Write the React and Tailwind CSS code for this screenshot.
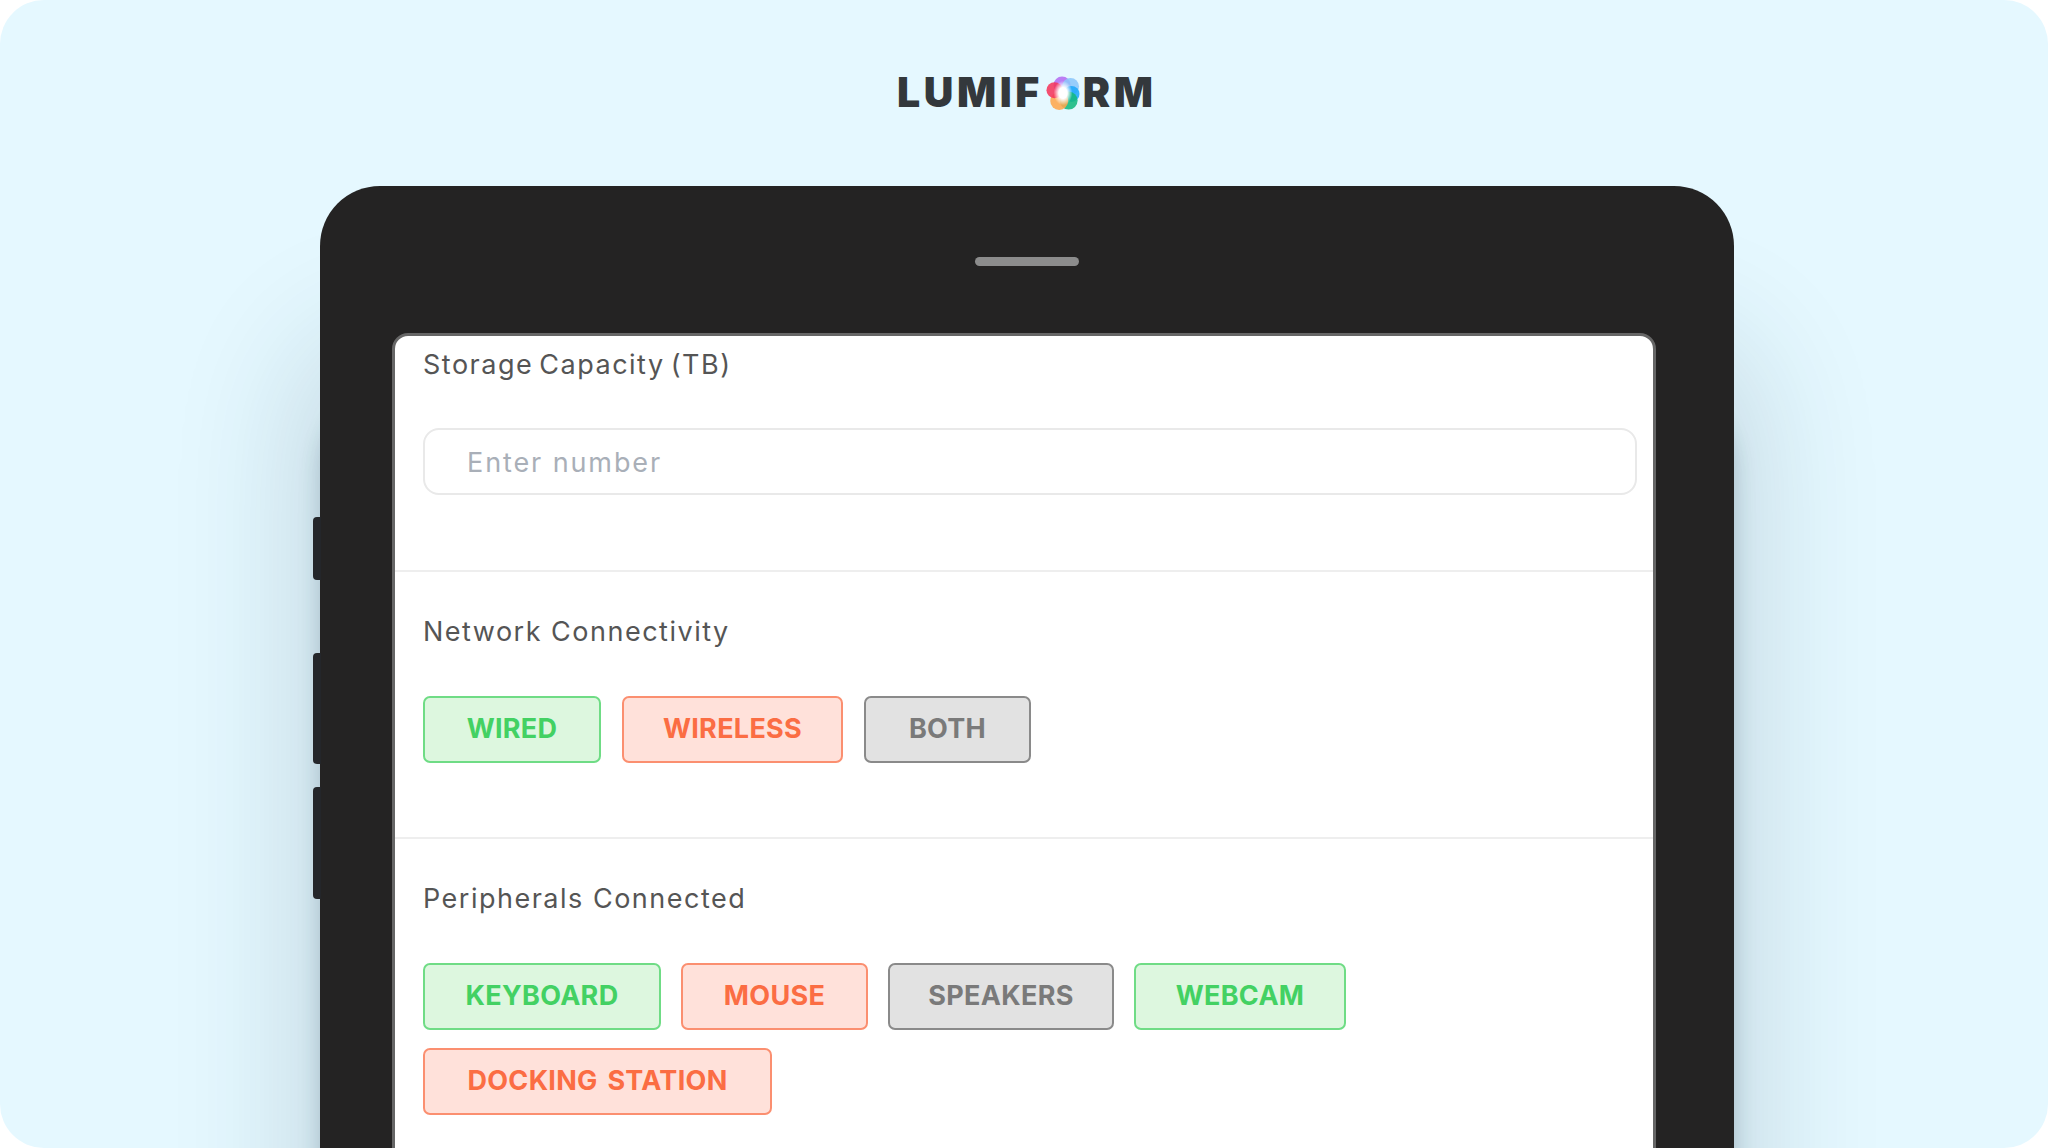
const toneClasses = {
  green: 'border-[#6fdc85] bg-[#ddf7df] text-[#43d163]',
  red: 'border-[#fb8f70] bg-[#ffe1da] text-[#fb6d43]',
  gray: 'border-[#8a8a8a] bg-[#e2e2e2] text-[#7a7a7a]',
};

const network = [
  { label: 'WIRED', tone: 'green', width: 'w-[178px]' },
  { label: 'WIRELESS', tone: 'red', width: 'w-[221px]' },
  { label: 'BOTH', tone: 'gray', width: 'w-[167px]' },
];

const peripherals = [
  { label: 'KEYBOARD', tone: 'green', width: 'w-[238px]' },
  { label: 'MOUSE', tone: 'red', width: 'w-[187px]' },
  { label: 'SPEAKERS', tone: 'gray', width: 'w-[226px]' },
  { label: 'WEBCAM', tone: 'green', width: 'w-[212px]' },
  { label: 'DOCKING STATION', tone: 'red', width: 'w-[349px]' },
];

function Flower() {
  return (
    <svg viewBox="0 0 36 36" className="w-[34px] h-[34px] mx-[3px]">
      <defs>
        <radialGradient id="core">
          <stop offset="0.45" stopColor="#fff" />
          <stop offset="1" stopColor="#fff" stopOpacity="0" />
        </radialGradient>
      </defs>
      <g fillOpacity="0.88">
        <circle cx="17" cy="9.5" r="9" fill="#b56cf2" />
        <circle cx="26" cy="11" r="9" fill="#8cc6fb" />
        <circle cx="27" cy="19" r="8.5" fill="#1fa8fb" />
        <circle cx="24" cy="26" r="9.5" fill="#14b87f" />
        <circle cx="14" cy="26.5" r="9.5" fill="#ffa64d" />
        <circle cx="9" cy="15" r="8.5" fill="#f5365c" />
      </g>
      <ellipse cx="18" cy="18" rx="10" ry="13" fill="url(#core)" />
    </svg>
  );
}

function Option({ label, tone, width }) {
  return (
    <button className={`h-[67px] pb-[1px] rounded-[7px] border-2 text-[27px] tracking-[0.3px] [word-spacing:3px] font-bold font-['Inter',sans-serif] ${width} ${toneClasses[tone]}`}>
      {label}
    </button>
  );
}

function Label({ children }) {
  return <div className="h-10 leading-[42px] text-[27px] tracking-[1.5px] text-[#555] font-['Inter',sans-serif]">{children}</div>;
}

export default function App() {
  return (
    <div className="w-[2048px] h-[1148px] overflow-hidden rounded-[44px] bg-[#e5f8ff]">
      <div className="h-[186px] pt-[73px] pl-[897px] flex items-start">
        <div className="flex items-center h-10 text-[41px] font-black tracking-[3.6px] text-[#33383c] font-['Inter',sans-serif]">
          LUMIF
          <Flower />
          RM
        </div>
      </div>

      <div className="relative ml-[320px] w-[1414px] h-[962px] pt-[71px] pl-[72px] pr-[78px] rounded-t-[60px] bg-[#242323] shadow-[0_170px_130px_20px_rgba(20,50,70,0.16),0_220px_22px_rgba(20,50,70,0.2)]">
        <div className="absolute left-[-7px] top-[331px] w-[8px] h-[63px] rounded-l bg-[#24262a]" />
        <div className="absolute left-[-7px] top-[467px] w-[8px] h-[111px] rounded-l bg-[#24262a]" />
        <div className="absolute left-[-7px] top-[601px] w-[8px] h-[112px] rounded-l bg-[#24262a]" />

        <div className="w-[104px] h-[9px] mx-auto translate-x-[3px] rounded-full bg-[#8c8c8c]" />

        <div className="mt-[67px] h-[900px] rounded-t-[16px] border-3 border-[#666] bg-white">
          <section className="pt-2 pl-[28px] pr-[16px] pb-[75px] border-b-2 border-[#eeeeee]">
            <Label>
              <span className="[word-spacing:-3px]">Storage Capacity (TB)</span>
            </Label>
            <div className="mt-[44px] h-[67px] pl-[42px] pt-[3px] flex items-center rounded-[16px] border-2 border-[#e9e9e9] text-[27px] tracking-[1.9px] text-[#a9afb8] font-['Inter',sans-serif]">
              Enter number
            </div>
          </section>

          <section className="pt-[39px] pl-[28px] pb-[74px] border-b-2 border-[#eeeeee]">
            <Label>Network Connectivity</Label>
            <div className="mt-[45px] flex gap-[21px]">
              {network.map((o) => (
                <Option key={o.label} {...o} />
              ))}
            </div>
          </section>

          <section className="pt-[39px] pl-[28px]">
            <Label>Peripherals Connected</Label>
            <div className="mt-[45px] max-w-[1000px] flex flex-wrap gap-x-[20px] gap-y-[18px]">
              {peripherals.map((o) => (
                <Option key={o.label} {...o} />
              ))}
            </div>
          </section>
        </div>
      </div>
    </div>
  );
}
